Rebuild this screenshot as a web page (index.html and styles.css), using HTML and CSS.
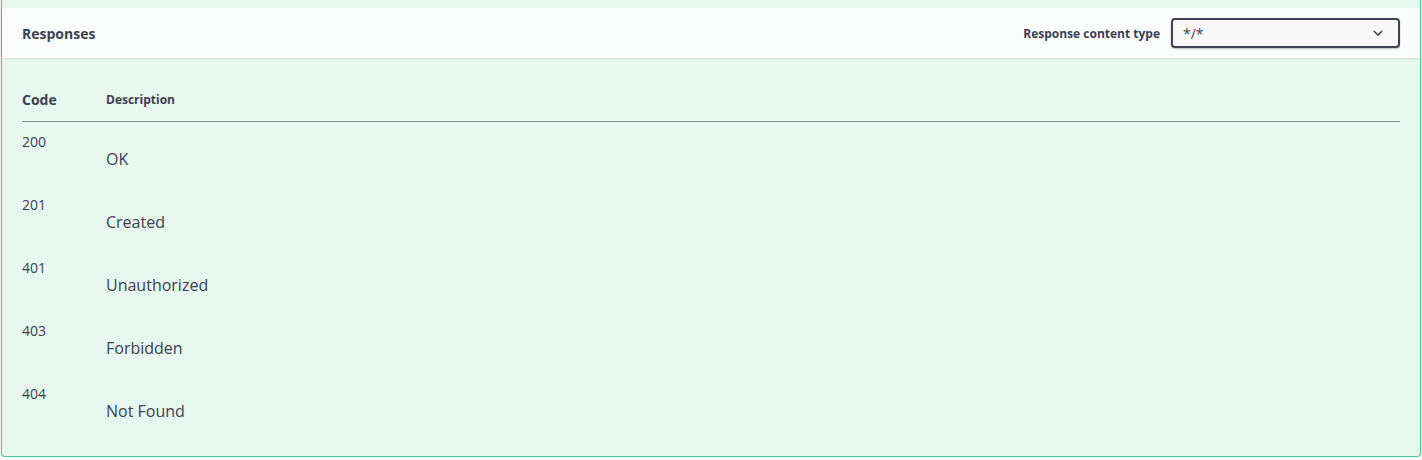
FILE: index.html
```html
<!DOCTYPE html>
<html>
<head>
<meta charset="utf-8">
<link rel="stylesheet" href="styles.css">
</head>
<body>
<div class="opblock">
  <div class="section-header">
    <h4 class="title">Responses</h4>
    <div class="media-type">
      <span class="media-label">Response content type</span>
      <div class="select">
        <span class="select-value">*/*</span>
        <svg class="chevron" width="20" height="20" viewBox="0 0 20 20"><path fill="#3b4151" d="M13.418 7.859a.695.695 0 01.978 0 .68.68 0 010 .969l-3.908 3.83a.697.697 0 01-.979 0l-3.908-3.830a.68.68 0 010-.969.695.695 0 01.978 0L10 11l3.418-3.141z"/></svg>
      </div>
    </div>
  </div>
  <div class="responses-inner">
    <table class="responses-table">
      <thead>
        <tr>
          <th class="col-status">Code</th>
          <th class="col-desc">Description</th>
        </tr>
      </thead>
      <tbody>
        <tr><td class="status">200</td><td class="desc"><p>OK</p></td></tr>
        <tr><td class="status">201</td><td class="desc"><p>Created</p></td></tr>
        <tr><td class="status">401</td><td class="desc"><p>Unauthorized</p></td></tr>
        <tr><td class="status">403</td><td class="desc"><p>Forbidden</p></td></tr>
        <tr><td class="status">404</td><td class="desc"><p>Not Found</p></td></tr>
      </tbody>
    </table>
  </div>
</div>
</body>
</html>
```
FILE: styles.css
```css
html, body {
  margin: 0;
  padding: 0;
  background: #ffffff;
}
body {
  font-family: "Open Sans", "Noto Sans", sans-serif;
  color: #3b4151;
  padding: 0 1px;
}
.opblock {
  background: #e8f6f0;
  border: 1px solid #49cc90;
  border-top: none;
  border-radius: 0 0 4px 4px;
  box-shadow: 0 0 3px rgba(0,0,0,.19);
  padding-top: 8px;
}
.section-header {
  display: flex;
  align-items: center;
  justify-content: space-between;
  min-height: 50px;
  box-sizing: border-box;
  padding: 8px 20px;
  background: rgba(255,255,255,.8);
  box-shadow: 0 1px 2px rgba(0,0,0,.1);
}
.title {
  margin: 0;
  font-size: 14px;
  font-weight: 700;
  color: #3b4151;
}
.media-type {
  display: flex;
  align-items: center;
  gap: 11px;
}
.media-label {
  font-size: 12px;
  font-weight: 700;
}
.select {
  display: flex;
  align-items: center;
  justify-content: space-between;
  box-sizing: border-box;
  width: 229px;
  height: 30px;
  padding: 0 10px 0 10px;
  border: 2px solid #41444e;
  border-radius: 4px;
  background: #f7f7f7;
  box-shadow: 0 1px 2px rgba(0,0,0,.25);
  font-size: 14px;
}
.chevron {
  display: block;
}
.responses-inner {
  padding: 20px 20px 19px 20px;
}
.responses-table {
  width: 100%;
  border-collapse: collapse;
}
.responses-table th {
  text-align: left;
  padding: 12px 0;
  border-bottom: 1px solid rgba(59,65,81,.35);
  font-weight: 700;
  line-height: 19px;
}
.col-status {
  width: 84px;
  font-size: 14px;
}
.col-desc {
  font-size: 12px;
}
.responses-table td {
  vertical-align: top;
  padding: 10px 10px 0 0;
}
.status {
  font-size: 14px;
  line-height: 20px;
}
.desc p {
  margin: 17px 0 15px;
  font-size: 16px;
  line-height: 21px;
}
```
